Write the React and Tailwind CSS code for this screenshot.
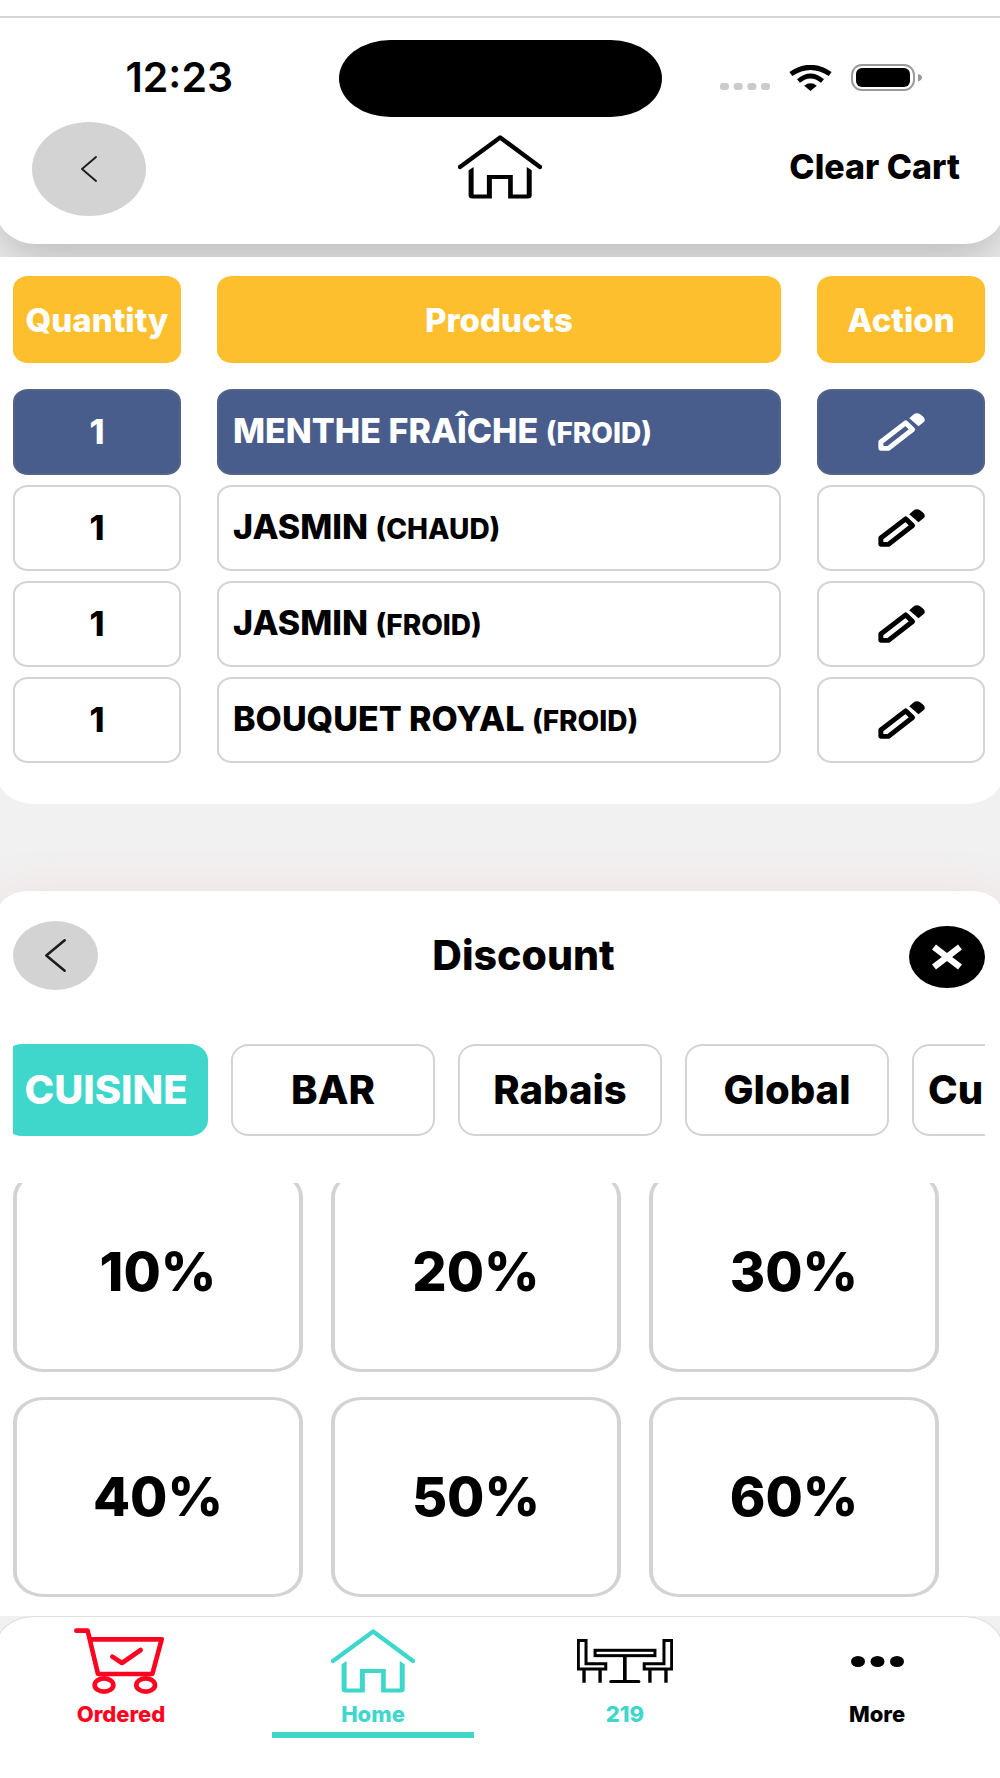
import React, { useState } from 'react';

const cartRows = [
  { id: 1, quantity: 1, name: 'MENTHE FRAÎCHE', option: '(FROID)' },
  { id: 2, quantity: 1, name: 'JASMIN', option: '(CHAUD)' },
  { id: 3, quantity: 1, name: 'JASMIN', option: '(FROID)' },
  { id: 4, quantity: 1, name: 'BOUQUET ROYAL', option: '(FROID)' },
];

const categories = ['CUISINE', 'BAR', 'Rabais', 'Global', 'Cu'];
const discounts = ['10%', '20%', '30%', '40%', '50%', '60%'];

const HomeIcon = () => (
  <svg viewBox="0 0 253 192" className="w-[84px] h-16" aria-hidden="true">
    <path
      d="M6 96 127 7 247 96"
      fill="none"
      stroke="currentColor"
      strokeWidth="13"
      strokeLinecap="round"
      strokeLinejoin="round"
    />
    <path
      d="M47 96 32 106V182Q32 191 43 191H102V132H151V191H210Q222 191 222 182V106L207 96V179H165V120H87V179H47Z"
      fill="currentColor"
    />
  </svg>
);

const CartIcon = () => (
  <svg
    viewBox="0 0 270 198"
    className="w-[90px] h-[66px] mr-1"
    fill="none"
    stroke="currentColor"
    strokeWidth="14"
    strokeLinecap="round"
    strokeLinejoin="round"
    aria-hidden="true"
  >
    <path d="M7 8H41L72 138H235L263 34H49" />
    <path d="M115 86 144 105 200 66" />
    <ellipse cx="90" cy="171" rx="28" ry="20" />
    <ellipse cx="215" cy="171" rx="28" ry="20" />
  </svg>
);

const TableIcon = () => (
  <svg
    viewBox="0 0 287 130"
    className="w-24 h-11"
    fill="none"
    stroke="currentColor"
    strokeWidth="9"
    aria-hidden="true"
  >
    <path d="M4 4H27V73H86V89H4Z" />
    <path d="M21 90V130M69 90V130" strokeWidth="10" />
    <rect x="54" y="33" width="179" height="16" />
    <path d="M143 52V126" strokeWidth="11" />
    <path d="M101 126H185" strokeLinecap="round" />
    <path d="M283 4H260V73H201V89H283Z" />
    <path d="M266 90V130M218 90V130" strokeWidth="10" />
  </svg>
);

const MoreIcon = () => (
  <svg viewBox="0 0 53 11" className="w-[53px] h-[11px]" fill="currentColor" aria-hidden="true">
    <ellipse cx="7" cy="5.5" rx="7" ry="5.5" />
    <ellipse cx="26.5" cy="5.5" rx="7" ry="5.5" />
    <ellipse cx="46" cy="5.5" rx="7" ry="5.5" />
  </svg>
);

const PencilIcon = () => (
  <svg viewBox="0 0 141 115" className="w-[47px] h-[38px]" aria-hidden="true">
    <path
      d="M8 88 83 30 104 50 31 107H8Z"
      fill="none"
      stroke="currentColor"
      strokeWidth="15"
      strokeLinejoin="round"
    />
    <path
      d="M94 16 106 5Q116-3 127 4L137 12Q145 22 137 28L122 40Z"
      fill="currentColor"
    />
  </svg>
);

const ChevronIcon = ({ className }) => (
  <svg viewBox="0 0 16 26" preserveAspectRatio="none" className={className} aria-hidden="true">
    <path
      d="M15 1 1 13 15 25"
      fill="none"
      stroke="#1c1c1c"
      strokeWidth="1.9"
      strokeLinecap="round"
      strokeLinejoin="round"
    />
  </svg>
);

function StatusBar() {
  return (
    <div className="grid grid-cols-[1fr_323px_1fr] items-center h-[77px]">
      <div className="pl-5 pb-[3px] text-center text-[41px] leading-10 font-semibold">12:23</div>
      <div className="h-full bg-black rounded-[52px/39px]" />
      <div className="flex items-center justify-center pr-5 pb-[2px]">
        <svg viewBox="0 0 50 27" className="w-[50px] h-[27px] mr-[19px]" fill="#cbcbcb">
          <rect x="0" y="19" width="9" height="7" rx="3" />
          <rect x="13.7" y="19" width="9" height="7" rx="3" />
          <rect x="27.4" y="19" width="9" height="7" rx="3" />
          <rect x="41" y="19" width="9" height="7" rx="3" />
        </svg>
        <svg viewBox="0 0 128 78" className="w-[43px] h-[26px] mr-[19px]">
          <path d="M64 78 45 62Q64 48 83 62Z" />
          <path d="M28 48Q64 18 100 48" fill="none" stroke="#000" strokeWidth="14" />
          <path d="M5 27Q64-13 123 27" fill="none" stroke="#000" strokeWidth="15" />
        </svg>
        <svg viewBox="0 0 71 27" className="w-[71px] h-[27px]">
          <rect x="1" y="1" width="62" height="25" rx="10" fill="none" stroke="#999" strokeWidth="1.9" />
          <rect x="5" y="4" width="54" height="19" rx="6" />
          <path d="M67 10Q71 11 71 13.500T67 17.500Z" fill="#999" />
        </svg>
      </div>
    </div>
  );
}

function CartTable({ selected, onSelect }) {
  return (
    <table className="block">
      <thead className="block">
        <tr className="flex gap-9 h-[87px] text-[33px] leading-9 text-white">
          <th className="w-[168px] flex items-center justify-center rounded-[15px/13px] bg-[#fdbf2d] font-extrabold">
            Quantity
          </th>
          <th className="flex-1 flex items-center justify-center rounded-[15px/13px] bg-[#fdbf2d] font-extrabold">
            Products
          </th>
          <th className="w-[168px] flex items-center justify-center rounded-[15px/13px] bg-[#fdbf2d] font-extrabold">
            Action
          </th>
        </tr>
      </thead>
      <tbody className="flex flex-col gap-[10px] mt-[26px] font-extrabold">
        {cartRows.map((row) => {
          const cell =
            row.id === selected
              ? 'border-2 border-[#536488] bg-[#485d8b] text-white rounded-[15px/13px]'
              : 'border-2 border-[#d3d3d3] bg-white text-black rounded-[15px/13px]';
          return (
            <tr
              key={row.id}
              onClick={() => onSelect(row.id)}
              className="flex gap-9 h-[86px] text-[34px] leading-9"
            >
              <td className={`w-[168px] flex items-center justify-center ${cell}`}>
                {row.quantity}
              </td>
              <td className={`flex-1 flex items-center pl-[14px] ${cell}`}>
                <span>
                  {row.name} <span className="text-[28px]">{row.option}</span>
                </span>
              </td>
              <td className={`w-[168px] flex ${cell}`}>
                <button
                  type="button"
                  aria-label={`Edit ${row.name}`}
                  className="flex-1 flex items-center justify-center"
                >
                  <PencilIcon />
                </button>
              </td>
            </tr>
          );
        })}
      </tbody>
    </table>
  );
}

function DiscountPanel() {
  const [category, setCategory] = useState('CUISINE');

  return (
    <section className="-mx-1 pl-[17px] pr-[19px] pt-[29px] pb-[19px] bg-white rounded-t-[32px_26px] shadow-[0_0_48px_rgba(225,90,110,0.11)]">
      <div className="flex items-center h-[70px]">
        <button
          type="button"
          aria-label="Back"
          className="w-[85px] h-[69px] rounded-[50%] bg-[#d3d3d3] flex items-center justify-center"
        >
          <ChevronIcon className="w-[21px] h-[33px]" />
        </button>
        <h2 className="flex-1 pl-10 text-center text-[41px] leading-10 font-extrabold">Discount</h2>
        <button
          type="button"
          aria-label="Close"
          className="mt-1 w-[76px] h-[62px] rounded-[50%] bg-black text-white flex items-center justify-center"
        >
          <svg viewBox="0 0 32 26" className="w-8 h-[26px]" aria-hidden="true">
            <path d="M3 3 29 23M29 3 3 23" stroke="currentColor" strokeWidth="6.500" />
          </svg>
        </button>
      </div>

      <div className="flex gap-[23px] mt-[54px] overflow-hidden">
        {categories.map((item, index) => (
          <button
            key={item}
            type="button"
            onClick={() => setCategory(item)}
            className={`w-[204px] h-[92px] shrink-0 rounded-[18px/16px] text-[40px] leading-10 font-extrabold ${
              index === 0 ? '-ml-[9px]' : ''
            } ${index === categories.length - 1 ? 'text-left pl-[14px]' : ''} ${
              item === category
                ? 'bg-[#3fd7cc] text-white'
                : 'border-2 border-[#d3d3d3] bg-white text-black'
            }`}
          >
            {item}
          </button>
        ))}
      </div>

      <div className="mt-[47px] mr-[46px] overflow-hidden">
        <div className="grid grid-cols-3 gap-x-7 gap-y-[25px] -mt-[11px]">
          {discounts.map((value) => (
            <button
              key={value}
              type="button"
              className="h-[200px] border-x-4 border-y-3 border-[#d3d3d3] rounded-[30px/25px] text-[54px] leading-none font-extrabold"
            >
              {value}
            </button>
          ))}
        </div>
      </div>
    </section>
  );
}

const NavItem = ({ icon, label, color, isActive }) => (
  <a href="#" className={`flex flex-col items-center ${color}`}>
    <span className="h-[72px] flex items-center">{icon}</span>
    <span className="mt-[5px] text-[22px] leading-6 font-extrabold">{label}</span>
    {isActive && <span className="mt-[6px] w-4/5 h-[6px] bg-[#3fd7cc]" />}
  </a>
);

function App() {
  const [selected, setSelected] = useState(1);

  return (
    <div className="min-h-screen flex flex-col bg-[#f1f1f1] text-black overflow-hidden font-['Inter','Liberation_Sans',sans-serif]">
      <div className="h-4 bg-white" />

      {/* Header with its shadow cut off by the cart below */}
      <div className="pb-[13px] overflow-hidden">
        <header className="-mx-1 px-1 pt-[22px] pb-7 bg-white border-t-2 border-[#d6d6d6] [border-bottom-left-radius:40px_34px] [border-bottom-right-radius:40px_34px] shadow-[0_20px_50px_rgba(0,0,0,0.22)]">
          <StatusBar />
          <div className="grid grid-cols-3 items-center mt-[5px] px-8">
            <button
              type="button"
              aria-label="Back"
              className="w-[114px] h-[94px] rounded-[50%] bg-[#d3d3d3] flex items-center justify-center"
            >
              <ChevronIcon className="w-4 h-[26px]" />
            </button>
            <a href="#" aria-label="Home" className="justify-self-center pb-1">
              <HomeIcon />
            </a>
            <button
              type="button"
              className="justify-self-end pr-2 pb-1 text-[34px] leading-10 font-extrabold"
            >
              Clear Cart
            </button>
          </div>
        </header>
      </div>

      <section className="-mx-1 pl-[17px] pr-[19px] pt-[19px] pb-[41px] mb-[87px] bg-white [border-bottom-left-radius:38px_32px] [border-bottom-right-radius:38px_32px]">
        <CartTable selected={selected} onSelect={setSelected} />
      </section>

      <DiscountPanel />

      <div className="flex-1 flex flex-col overflow-hidden bg-[#f1f1f1] relative">
        <nav className="flex-1 -ml-1.5 -mr-1 pt-2 grid grid-cols-4 bg-white border border-[#dedede] border-b-0 [border-top-left-radius:40px_34px] [border-top-right-radius:40px_34px]">
          <NavItem icon={<CartIcon />} label="Ordered" color="text-[#fd0520]" />
          <NavItem icon={<HomeIcon />} label="Home" color="text-[#3fd7cc]" isActive />
          <NavItem
            icon={
              <span className="text-black">
                <TableIcon />
              </span>
            }
            label="219"
            color="text-[#3fd7cc]"
          />
          <NavItem icon={<MoreIcon />} label="More" color="text-black" />
        </nav>
      </div>
    </div>
  );
}

export default App;
